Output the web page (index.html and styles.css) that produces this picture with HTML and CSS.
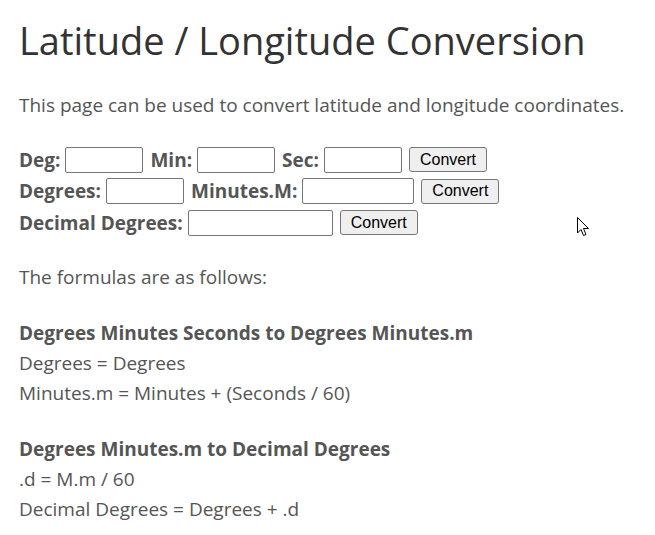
FILE: index.html
```html
<!DOCTYPE html>
<html>
<head>
<meta charset="utf-8">
<link rel="stylesheet" href="styles.css">
</head>
<body>
<h1 class="title">Latitude / Longitude Conversion</h1>
<p class="intro">This page can be used to convert latitude and longitude coordinates.</p>
<form class="conv">
  <div class="row">
    <label>Deg:</label><input class="in w78" type="text">
    <label>Min:</label><input class="in w78" type="text">
    <label>Sec:</label><input class="in w78" type="text">
    <button type="button" class="btn">Convert</button>
  </div>
  <div class="row">
    <label>Degrees:</label><input class="in w78" type="text">
    <label>Minutes.M:</label><input class="in w112" type="text">
    <button type="button" class="btn">Convert</button>
  </div>
  <div class="row">
    <label>Decimal Degrees:</label><input class="in w145" type="text">
    <button type="button" class="btn">Convert</button>
  </div>
</form>
<p class="txt">The formulas are as follows:</p>
<div class="block">
  <div class="bold">Degrees Minutes Seconds to Degrees Minutes.m</div>
  <div>Degrees = Degrees</div>
  <div>Minutes.m = Minutes + (Seconds / 60)</div>
</div>
<div class="block">
  <div class="bold">Degrees Minutes.m to Decimal Degrees</div>
  <div>.d = M.m / 60</div>
  <div>Decimal Degrees = Degrees + .d</div>
</div>
<svg class="cursor" width="13" height="20" viewBox="0 0 13 20"><path d="M0.5 0.5 L0.5 16 L4 12.5 L6.5 18.5 L9 17.5 L6.5 11.5 L11.5 11.5 Z" fill="#fff" stroke="#000" stroke-width="1"/></svg>
</body>
</html>
```
FILE: styles.css
```css
html, body { margin: 0; padding: 0; background: #fff; }
body {
  font-family: "Open Sans", "Noto Sans", sans-serif;
  font-size: 19px;
  line-height: 30px;
  color: #555;
  padding: 0 19px;
  position: relative;
  height: 535px;
  overflow: hidden;
}
.title {
  font-weight: 400;
  font-size: 38px;
  line-height: 44px;
  color: #333;
  margin: 18px 0 0 0;
}
.intro { margin: 28px 0 0 0; }
.conv { margin: 24px 0 0 0; }
.row {
  display: flex;
  align-items: center;
  height: 31.5px;
}
.row label {
  font-weight: 700;
  margin-right: 5px;
}
.in {
  box-sizing: border-box;
  height: 26px;
  border: 1px solid #767676;
  border-radius: 2px;
  padding: 1px 2px;
  margin-right: 7px;
  font-family: "Liberation Sans", Arial, sans-serif;
  font-size: 13px;
}
.w78 { width: 78px; }
.w112 { width: 112px; }
.w145 { width: 145px; }
.btn {
  box-sizing: border-box;
  height: 25px;
  padding: 0 10px;
  font-family: "Liberation Sans", Arial, sans-serif;
  font-size: 16px;
  color: #000;
  background: #efefef;
  border: 1px solid #767676;
  border-radius: 3px;
}
.txt { margin: 23px 0 0 0; }
.block { margin-top: 26px; }
.bold { font-weight: 700; }
.cursor { position: absolute; left: 577px; top: 217px; }
```
